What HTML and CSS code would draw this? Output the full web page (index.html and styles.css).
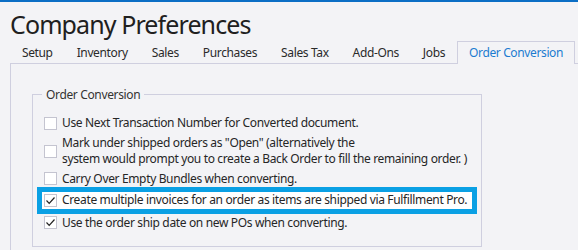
FILE: index.html
```html
<!DOCTYPE html>
<html lang="en">
<head>
  <meta charset="UTF-8">
  <title>Company Preferences</title>
  <link rel="stylesheet" href="styles.css">
</head>
<body>
  <div class="topbar"></div>
  <h1 class="title">Company Preferences</h1>

  <div class="tabs">
    <span class="tab">Setup</span>
    <span class="tab">Inventory</span>
    <span class="tab">Sales</span>
    <span class="tab">Purchases</span>
    <span class="tab">Sales Tax</span>
    <span class="tab">Add-Ons</span>
    <span class="tab">Jobs</span>
    <span class="tab active">Order Conversion</span>
  </div>

  <div class="panel">
    <fieldset class="group">
      <legend>Order Conversion</legend>

      <div class="row">
        <span class="box"></span>
        <span class="label">Use Next Transaction Number for Converted document.</span>
      </div>
      <div class="row">
        <span class="box"></span>
        <span class="label">Mark under shipped orders as "Open" (alternatively the<br>system would prompt you to create a Back Order to fill the remaining order. )</span>
      </div>
      <div class="row">
        <span class="box"></span>
        <span class="label">Carry Over Empty Bundles when converting.</span>
      </div>
      <div class="row highlight">
        <span class="box">
          <svg width="11" height="11" viewBox="0 0 11 11"><path d="M1.5 5.5 L4.2 8.3 L9.5 2.5" fill="none" stroke="#222" stroke-width="1.2"/></svg>
        </span>
        <span class="label">Create multiple invoices for an order as items are shipped via Fulfillment Pro.</span>
      </div>
      <div class="row">
        <span class="box">
          <svg width="11" height="11" viewBox="0 0 11 11"><path d="M1.5 5.5 L4.2 8.3 L9.5 2.5" fill="none" stroke="#222" stroke-width="1.2"/></svg>
        </span>
        <span class="label">Use the order ship date on new POs when converting.</span>
      </div>
    </fieldset>
  </div>
</body>
</html>
```

FILE: styles.css
```css
body {
  margin: 0;
  background: #f3f3f6;
  font-family: "Noto Sans", sans-serif;
  color: #262626;
  overflow: hidden;
  white-space: nowrap;
}
.topbar {
  height: 2px;
  background: #0b6ec5;
}
.title {
  margin: 0;
  padding: 5px 0 0 10px;
  height: 34px;
  font-size: 25px;
  font-weight: 400;
  letter-spacing: -0.9px;
  color: #202020;
  line-height: 34px;
}
.tabs {
  display: flex;
  margin-left: 10px;
  height: 22px;
  border-bottom: 1px solid #cfcfdf;
  font-size: 12px;
  letter-spacing: -0.37px;
}
.tab {
  padding: 2px 12px 0;
  line-height: 20px;
  color: #2a2a2a;
}
.tab.active {
  box-sizing: border-box;
  padding: 1px 11px 0;
  height: 23px;
  border: 1px solid #cfcfdf;
  border-bottom: none;
  background: #f3f3f6;
  color: #1b7bd0;
}
.panel {
  margin-left: 10px;
  border-left: 1px solid #cfcfdf;
  padding: 22px 0 10px 21px;
}
.group {
  margin: 0;
  width: 450px;
  box-sizing: border-box;
  border: 1px solid #cfcfdf;
  padding: 12px 0 12px 11px;
  font-size: 12px;
  letter-spacing: -0.35px;
}
.group legend {
  padding: 0 4px;
  margin-left: -2px;
  color: #333;
}
.row {
  display: flex;
  align-items: center;
  gap: 5px;
  line-height: 16.5px;
  margin-bottom: 3px;
}
.box {
  flex: none;
  width: 13px;
  height: 13px;
  box-sizing: border-box;
  border: 1px solid #c4c4d0;
  background: #fff;
  display: flex;
  align-items: center;
  justify-content: center;
}
.highlight {
  margin: -3px 0 1px -7px;
  width: 426px;
  padding: 0 2px;
  border: 5px solid #0aa0e4;
  background: #fff;
}
```
